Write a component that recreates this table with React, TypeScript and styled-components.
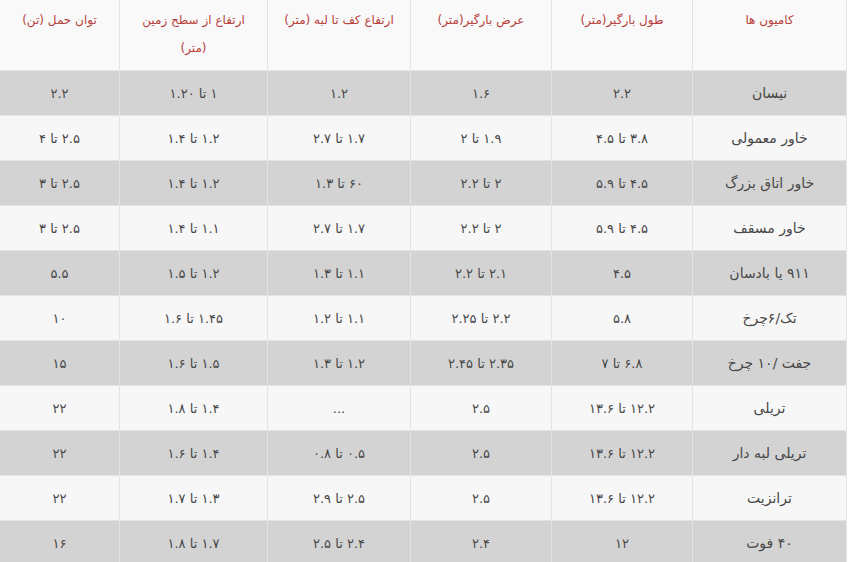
import React from "react";
import styled, { createGlobalStyle } from "styled-components";

const Global = createGlobalStyle`
  html, body { margin: 0; padding: 0; background: #ffffff; }
  body { font-family: "DejaVu Sans", "Noto Sans", sans-serif; }
`;

const Page = styled.div`
  width: 847px;
  direction: rtl;
`;

const Table = styled.table`
  width: 847px;
  border-collapse: collapse;
  table-layout: fixed;
  direction: rtl;
  font-family: "DejaVu Sans", "Noto Sans", sans-serif;
`;

const Col = styled.col<{ $w: number }>`
  width: ${(p) => p.$w}px;
`;

const HeadRow = styled.tr`
  height: 70px;
  background: #f9f9f9;
`;

const HeadCell = styled.th`
  box-sizing: border-box;
  vertical-align: top;
  padding: 6px 6px 8px;
  color: #b8403a;
  font-size: 12px;
  font-weight: normal;
  line-height: 28px;
  text-align: center;
  border: 1px solid #e4e4e4;
  border-top: none;
`;

const Row = styled.tr<{ $shade: boolean }>`
  height: 45px;
  background: ${(p) => (p.$shade ? "#d3d3d3" : "#f7f7f7")};
`;

const Cell = styled.td<{ $name?: boolean }>`
  box-sizing: border-box;
  padding: 0 6px;
  text-align: center;
  vertical-align: middle;
  color: #474747;
  font-size: ${(p) => (p.$name ? "14px" : "13px")};
  border: 1px solid #e4e4e4;
  white-space: nowrap;
`;

const widths = [154, 141, 141, 143, 148, 120];

const rows: string[][] = [
  ["نیسان", "۲.۲", "۱.۶", "۱.۲", "۱ تا ۱.۲۰", "۲.۲"],
  ["خاور معمولی", "۳.۸ تا ۴.۵", "۱.۹ تا ۲", "۱.۷ تا ۲.۷", "۱.۲ تا ۱.۴", "۲.۵ تا ۴"],
  ["خاور اتاق بزرگ", "۴.۵ تا ۵.۹", "۲ تا ۲.۲", "۶۰ تا ۱.۳", "۱.۲ تا ۱.۴", "۲.۵ تا ۳"],
  ["خاور مسقف", "۴.۵ تا ۵.۹", "۲ تا ۲.۲", "۱.۷ تا ۲.۷", "۱.۱ تا ۱.۴", "۲.۵ تا ۳"],
  ["۹۱۱ یا بادسان", "۴.۵", "۲.۱ تا ۲.۲", "۱.۱ تا ۱.۳", "۱.۲ تا ۱.۵", "۵.۵"],
  ["تک/۶چرخ", "۵.۸", "۲.۲ تا ۲.۲۵", "۱.۱ تا ۱.۲", "۱.۴۵ تا ۱.۶", "۱۰"],
  ["جفت /۱۰ چرخ", "۶.۸ تا ۷", "۲.۳۵ تا ۲.۴۵", "۱.۲ تا ۱.۳", "۱.۵ تا ۱.۶", "۱۵"],
  ["تریلی", "۱۲.۲ تا ۱۳.۶", "۲.۵", "...", "۱.۴ تا ۱.۸", "۲۲"],
  ["تریلی لبه دار", "۱۲.۲ تا ۱۳.۶", "۲.۵", "۰.۵ تا ۰.۸", "۱.۴ تا ۱.۶", "۲۲"],
  ["ترانزیت", "۱۲.۲ تا ۱۳.۶", "۲.۵", "۲.۵ تا ۲.۹", "۱.۳ تا ۱.۷", "۲۲"],
  ["۴۰ فوت", "۱۲", "۲.۴", "۲.۴ تا ۲.۵", "۱.۷ تا ۱.۸", "۱۶"],
];

const headers: React.ReactNode[] = [
  "کامیون ها",
  "طول بارگیر(متر)",
  "عرض بارگیر(متر)",
  "ارتفاع کف تا لبه (متر)",
  <>
    ارتفاع از سطح زمین
    <br />
    (متر)
  </>,
  "توان حمل (تن)",
];

export default function App() {
  return (
    <Page>
      <Global />
      <Table>
        <colgroup>
          {widths.map((w, i) => (
            <Col key={i} $w={w} />
          ))}
        </colgroup>
        <thead>
          <HeadRow>
            {headers.map((h, i) => (
              <HeadCell key={i}>{h}</HeadCell>
            ))}
          </HeadRow>
        </thead>
        <tbody>
          {rows.map((r, i) => (
            <Row key={i} $shade={i % 2 === 0}>
              {r.map((c, j) => (
                <Cell key={j} $name={j === 0}>
                  {c}
                </Cell>
              ))}
            </Row>
          ))}
        </tbody>
      </Table>
    </Page>
  );
}
